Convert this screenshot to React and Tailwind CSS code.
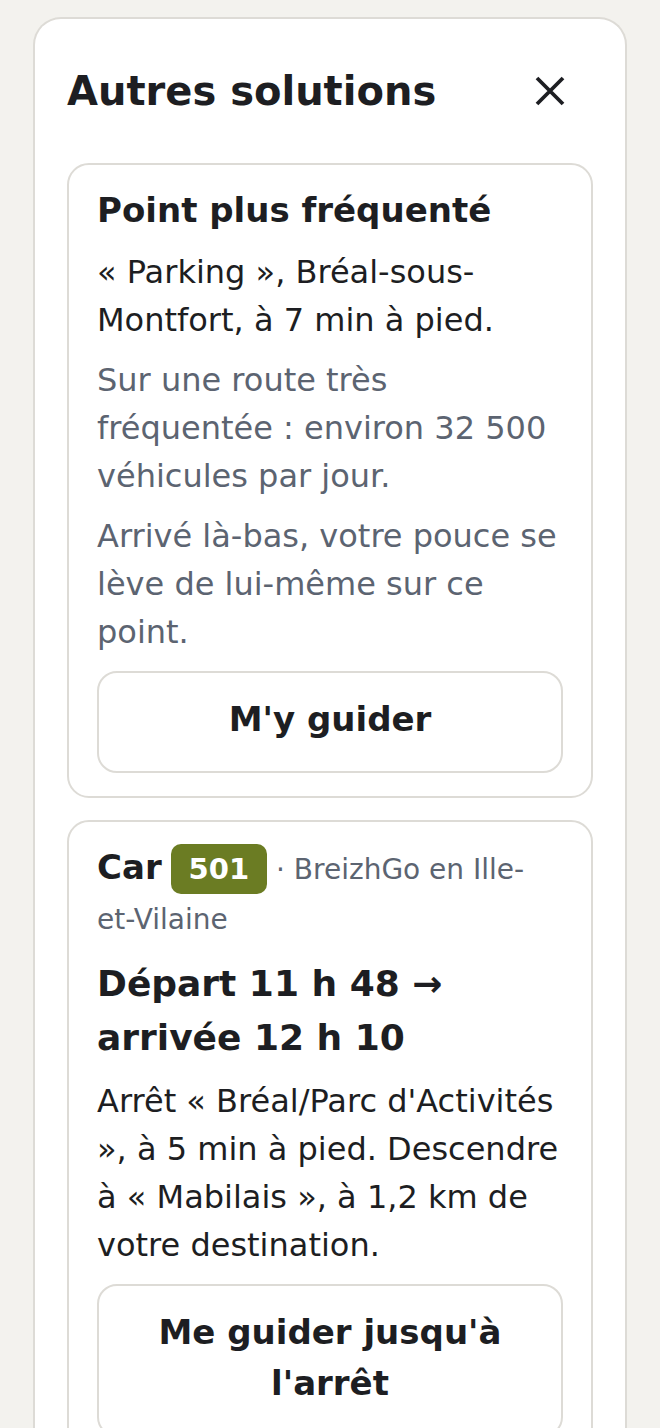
import React from 'react';

const font = { fontFamily: '"DejaVu Sans", Verdana, sans-serif' };

const CloseIcon = () => (
  <svg width="32" height="32" viewBox="0 0 32 32" fill="none">
    <path d="M3 3 L29 29 M29 3 L3 29" stroke="#1d1e22" strokeWidth="3.8" />
  </svg>
);

const GuideButton = ({ children }) => (
  <button
    type="button"
    className="mt-[15px] w-full rounded-[20px] border-2 border-[#dddbd6] bg-white pt-[21px] pb-[26px] px-6 text-center text-[34px] leading-[51px] font-bold text-[#1d1e22]"
  >
    {children}
  </button>
);

const App = () => {
  return (
    <div className="min-h-screen bg-[#f3f2ee] px-[33px] pt-[17px]" style={font}>
      <div className="rounded-t-[28px] border-2 border-b-0 border-[#dddbd6] bg-white px-8 pt-[42px] pb-10">
        <div className="flex items-center justify-between mb-[42px]">
          <h2 className="text-[40px] leading-[60px] font-bold text-[#1d1e22]">Autres solutions</h2>
          <button type="button" className="mr-[27px] flex items-center justify-center" aria-label="Fermer">
            <CloseIcon />
          </button>
        </div>

        <div className="flex flex-col gap-[22px]">
          {/* point plus fréquenté */}
          <div className="rounded-[22px] border-2 border-[#dddbd6] px-7 pt-5 pb-[23px]">
            <h3 className="text-[34px] leading-[51px] font-bold text-[#1d1e22]">Point plus fréquenté</h3>
            <p className="mt-3 text-[32px] leading-[48px] text-[#1d1e22]">
              « Parking », Bréal-sous-Montfort, à 7 min à pied.
            </p>
            <p className="mt-3 text-[32px] leading-[48px] text-[#5c6471]">
              Sur une route très fréquentée : environ 32 500 véhicules par jour.
            </p>
            <p className="mt-3 text-[32px] leading-[48px] text-[#5c6471]">
              Arrivé là-bas, votre pouce se lève de lui-même sur ce point.
            </p>
            <GuideButton>M'y guider</GuideButton>
          </div>

          {/* car */}
          <div className="rounded-[22px] border-2 border-[#dddbd6] px-7 pt-5 pb-[23px]">
            <p className="pr-2 text-[28px] leading-[50px] text-[#5c6471]">
              <span className="text-[34px] font-bold text-[#1d1e22]">Car</span>{' '}
              <span className="inline-block rounded-[10px] bg-[#6b7c23] px-[18px] py-[8px] text-[29px] leading-[34px] font-bold text-white">
                501
              </span>{' '}
              · BreizhGo en Ille-et-Vilaine
            </p>
            <h3 className="mt-3 text-[36px] leading-[54px] font-bold text-[#1d1e22]">
              Départ 11 h 48 → arrivée 12 h 10
            </h3>
            <p className="mt-3 text-[32px] leading-[48px] text-[#1d1e22]">
              Arrêt « Bréal/Parc d'Activités », à 5 min à pied. Descendre à « Mabilais », à 1,2 km de votre destination.
            </p>
            <GuideButton>Me guider jusqu'à l'arrêt</GuideButton>
          </div>
        </div>
      </div>
    </div>
  );
};

export default App;
